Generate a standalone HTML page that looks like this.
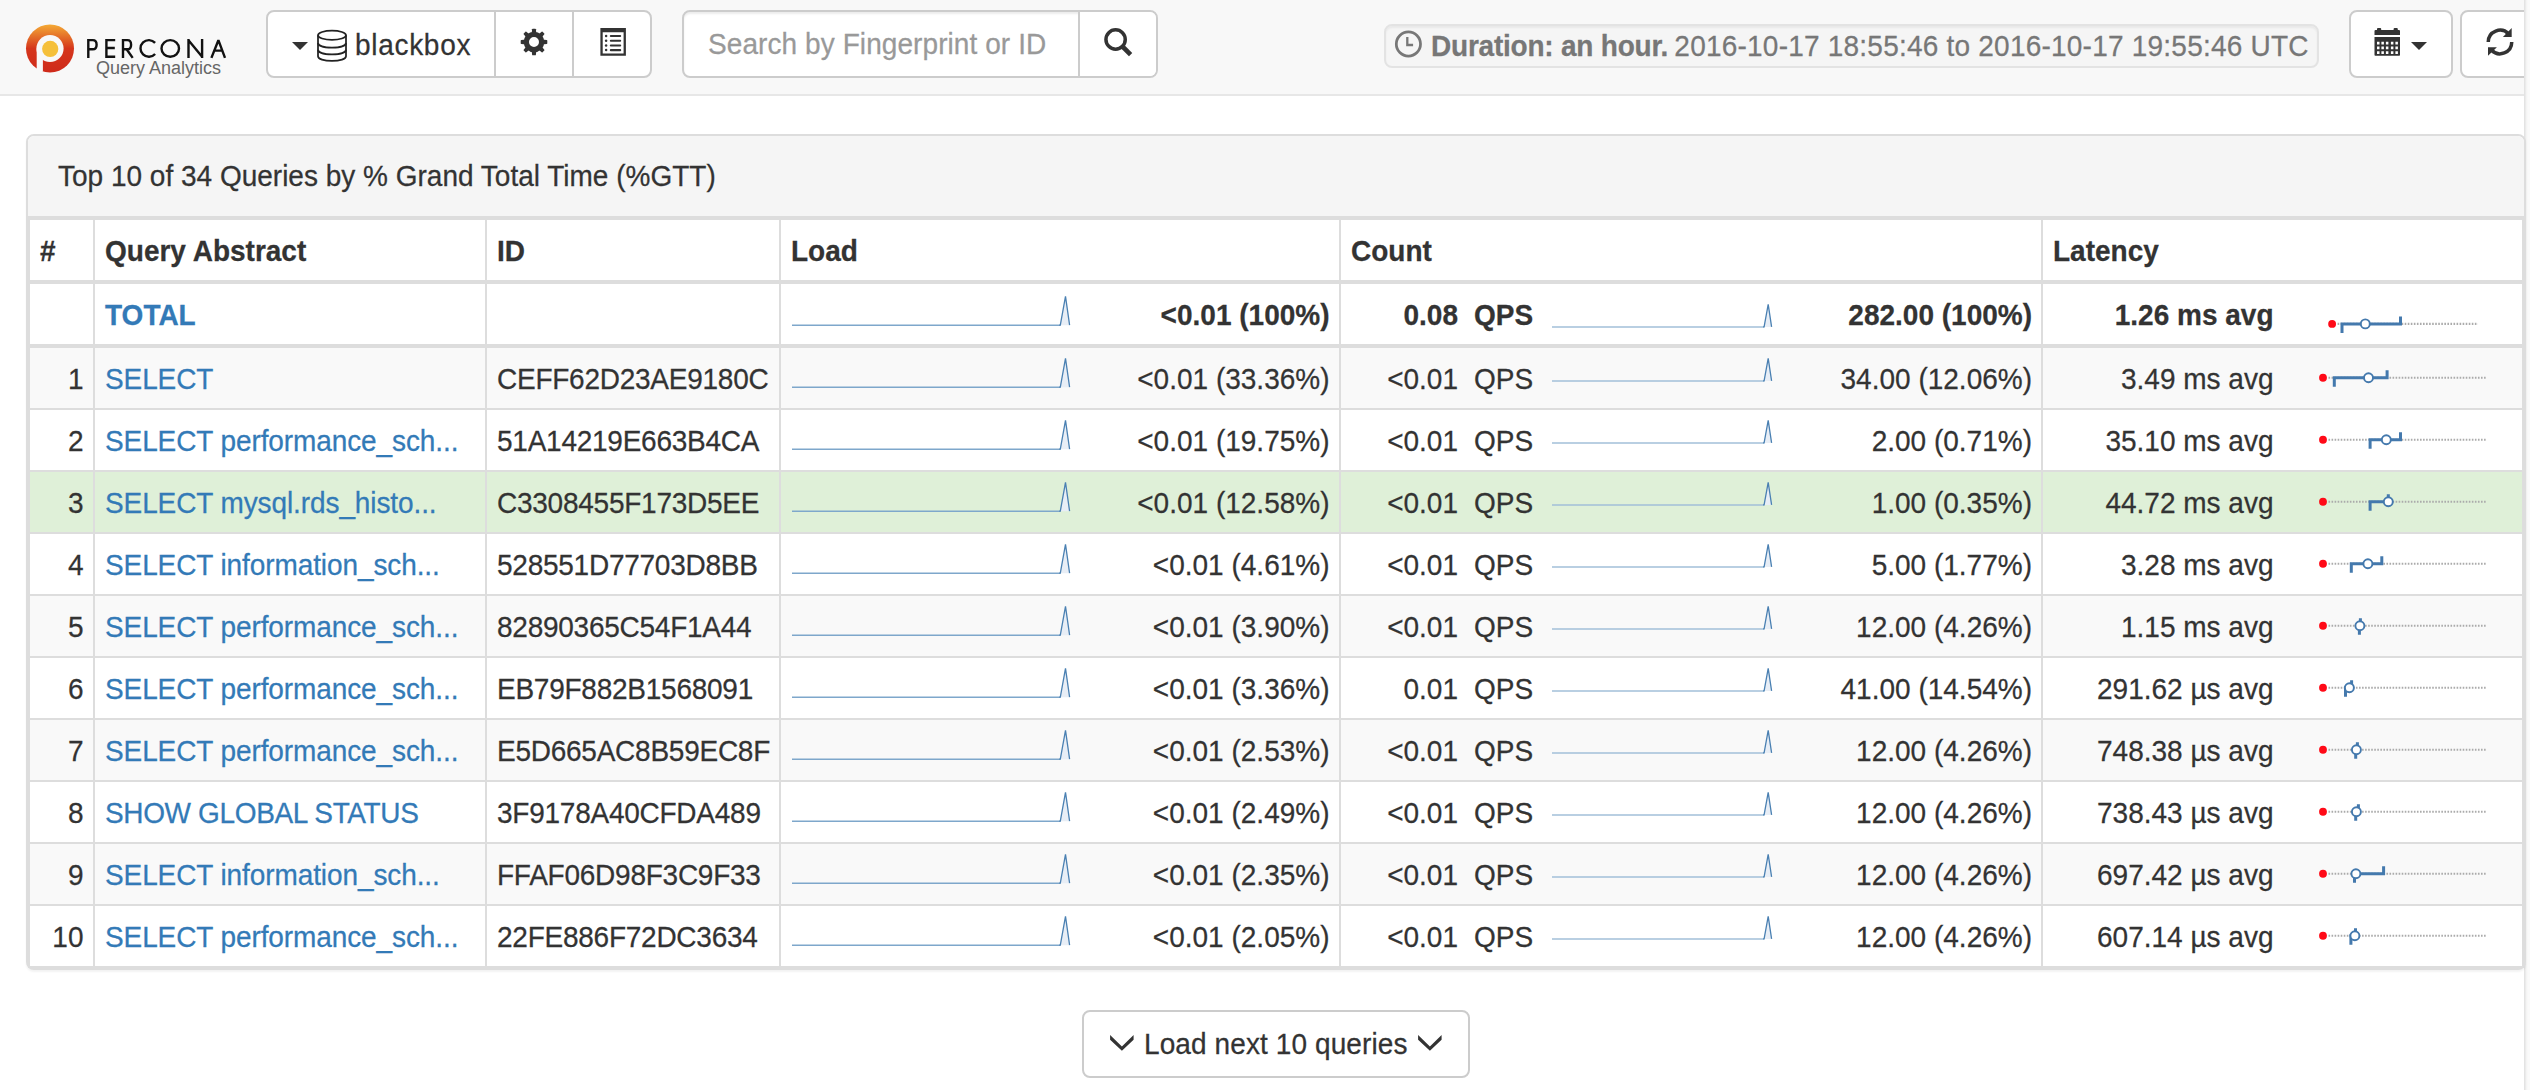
<!DOCTYPE html><html><head><meta charset="utf-8"><style>
*{box-sizing:border-box;margin:0;padding:0}
html,body{width:2530px;height:1090px;overflow:hidden;background:#fff}
body{position:relative;font-family:"Liberation Sans", sans-serif;font-size:28px;color:#333;line-height:40px}
.a{position:absolute}
.t{position:absolute;white-space:nowrap;line-height:60px;height:60px;transform:translateY(1px) scaleY(1.065);transform-origin:0 29.7px;-webkit-text-stroke:0.25px currentColor}
.r{text-align:right}
.b{font-weight:bold}
.lk{color:#337ab7}
.tx{transform:translateY(0.5px) scaleY(1.065);transform-origin:0 19.7px;-webkit-text-stroke:0.25px currentColor}
.hl{position:absolute;background:#ddd}
</style></head><body>
<div class="a" style="left:0;top:0;width:2530px;height:94px;background:#f8f8f8"></div>
<div class="a" style="left:0;top:94px;width:2530px;height:2px;background:#e7e7e7"></div>
<svg class="a" style="left:20px;top:18px" width="60" height="60" viewBox="0 0 60 60">
<defs><linearGradient id="lg" x1="0" y1="0" x2="0" y2="1"><stop offset="0" stop-color="#f4aa35"/><stop offset="0.5" stop-color="#d5361c"/><stop offset="1" stop-color="#cf2a1a"/></linearGradient></defs>
<circle cx="30" cy="30.5" r="24" fill="url(#lg)"/>
<circle cx="30" cy="30.5" r="13.6" fill="#f8f8f8"/>
<rect x="16.7" y="30.5" width="6.2" height="23" fill="#f8f8f8"/>
<circle cx="30.2" cy="30.9" r="8.1" fill="#f5c03a"/>
</svg>
<svg class="a" style="left:0;top:0" width="240" height="80" viewBox="0 0 240 80" fill="none" stroke="#111" stroke-width="2.4" stroke-linejoin="miter">
<path d="M88.3 57.9 V40.1 H92.8 C95.9 40.1 96.6 42.2 96.6 44.7 C96.6 47.2 95.6 49.3 92.8 49.3 H88.3"/>
<path d="M115.2 40.1 H106.4 V56.7 H115.2 M106.4 48 H114.8"/>
<path d="M123 57.9 V40.1 H127.4 C130.5 40.1 131.1 42.2 131.1 44.7 C131.1 47.2 130.1 49.3 127.4 49.3 H123 M126.6 49.3 L132.7 57.9"/>
<path d="M155.1 42.9 A8.35 8.35 0 1 0 155.1 54"/>
<ellipse cx="170.25" cy="48.4" rx="8.75" ry="8.3"/>
<path d="M188.5 57.9 V38.9 M188.3 40 L202.3 57 M202.1 57.9 V38.9"/>
<path d="M211.4 57.9 L218.4 40.2 L225 57.9 M214 50.6 H222.6" stroke-linejoin="bevel"/>
</svg>
<div class="a" style="left:96px;top:56.5px;font-size:18px;line-height:22px;color:#666">Query Analytics</div>
<div class="a" style="left:266px;top:10px;width:386px;height:68px;background:#fff;border:2px solid #ccc;border-radius:8px"></div>
<div class="a" style="left:494px;top:10px;width:2px;height:68px;background:#ccc"></div>
<div class="a" style="left:572px;top:10px;width:2px;height:68px;background:#ccc"></div>
<div class="a" style="left:292px;top:42px;width:0;height:0;border-left:8px solid transparent;border-right:8px solid transparent;border-top:8px solid #333"></div>
<svg class="a" style="left:316px;top:29px" width="32" height="34" viewBox="0 0 32 34" fill="none" stroke="#222" stroke-width="1.75">
<ellipse cx="16" cy="6.25" rx="14" ry="4.55"/>
<path d="M2 6.25 V27.2 C2 30 8 31.9 16 31.9 C24 31.9 30 30 30 27.2 V6.25"/>
<path d="M2 13.9 C2 16.7 8 18.5 16 18.5 C24 18.5 30 16.7 30 13.9"/>
<path d="M2 20.8 C2 23.6 8 25.4 16 25.4 C24 25.4 30 23.6 30 20.8"/>
</svg>
<div class="a tx" style="left:355px;top:24.5px;line-height:40px;letter-spacing:0.7px">blackbox</div>
<svg class="a" style="left:520px;top:28px" width="28" height="28" viewBox="0 0 28 28">
<g fill="#333"><path d="M11.6 6 L12.1 1.3 Q12.2 0.7 12.8 0.7 H15.2 Q15.8 0.7 15.9 1.3 L16.4 6 Z" transform="rotate(0 14 14)"/><path d="M11.6 6 L12.1 1.3 Q12.2 0.7 12.8 0.7 H15.2 Q15.8 0.7 15.9 1.3 L16.4 6 Z" transform="rotate(45 14 14)"/><path d="M11.6 6 L12.1 1.3 Q12.2 0.7 12.8 0.7 H15.2 Q15.8 0.7 15.9 1.3 L16.4 6 Z" transform="rotate(90 14 14)"/><path d="M11.6 6 L12.1 1.3 Q12.2 0.7 12.8 0.7 H15.2 Q15.8 0.7 15.9 1.3 L16.4 6 Z" transform="rotate(135 14 14)"/><path d="M11.6 6 L12.1 1.3 Q12.2 0.7 12.8 0.7 H15.2 Q15.8 0.7 15.9 1.3 L16.4 6 Z" transform="rotate(180 14 14)"/><path d="M11.6 6 L12.1 1.3 Q12.2 0.7 12.8 0.7 H15.2 Q15.8 0.7 15.9 1.3 L16.4 6 Z" transform="rotate(225 14 14)"/><path d="M11.6 6 L12.1 1.3 Q12.2 0.7 12.8 0.7 H15.2 Q15.8 0.7 15.9 1.3 L16.4 6 Z" transform="rotate(270 14 14)"/><path d="M11.6 6 L12.1 1.3 Q12.2 0.7 12.8 0.7 H15.2 Q15.8 0.7 15.9 1.3 L16.4 6 Z" transform="rotate(315 14 14)"/></g>
<path fill="#333" fill-rule="evenodd" d="M14 3.7 A10.3 10.3 0 1 0 14 24.3 A10.3 10.3 0 1 0 14 3.7 Z M14 9 A5 5 0 1 0 14 19 A5 5 0 1 0 14 9 Z"/></svg>
<svg class="a" style="left:600px;top:28px" width="27" height="29" viewBox="0 0 27 29">
<path fill="#333" fill-rule="evenodd" d="M0.4 0 H25.9 V27.7 H0.4 Z M2.7 4.2 V25.4 H23.6 V4.2 Z"/>
<g fill="#333"><circle cx="6.1" cy="8" r="1.25"/><rect x="9.8" y="7" width="11.4" height="2.1" rx="1"/>
<circle cx="6.1" cy="12.7" r="1.25"/><rect x="9.8" y="11.7" width="11.4" height="2.1" rx="1"/>
<circle cx="6.1" cy="17.4" r="1.25"/><rect x="9.8" y="16.4" width="11.4" height="2.1" rx="1"/>
<circle cx="6.1" cy="22.1" r="1.25"/><rect x="9.8" y="21.1" width="11.4" height="2.1" rx="1"/></g>
</svg>
<div class="a" style="left:682px;top:10px;width:476px;height:68px;background:#fff;border:2px solid #ccc;border-radius:8px;box-shadow:inset 0 2px 2px rgba(0,0,0,.075)"></div>
<div class="a" style="left:1078px;top:10px;width:2px;height:68px;background:#ccc"></div>
<div class="a" style="left:1080px;top:12px;width:76px;height:64px;background:#fff;border-radius:0 6px 6px 0"></div>
<div class="a tx" style="left:708px;top:23.5px;color:#999;letter-spacing:0.08px">Search by Fingerprint or ID</div>
<svg class="a" style="left:1103px;top:27px" width="31" height="31" viewBox="0 0 31 31">
<circle cx="12.6" cy="12.5" r="9.65" fill="none" stroke="#333" stroke-width="3.5"/>
<path d="M19 19 L27.6 27.6" stroke="#333" stroke-width="4.6" stroke-linecap="butt" stroke-linejoin="round"/></svg>
<div class="a" style="left:1384px;top:24px;width:935px;height:44px;background:#f5f5f5;border:2px solid #e3e3e3;border-radius:8px;box-shadow:inset 0 2px 2px rgba(0,0,0,.05)"></div>
<svg class="a" style="left:1394px;top:30px" width="29" height="29" viewBox="0 0 29 29">
<circle cx="14.4" cy="14" r="12.1" fill="none" stroke="#777" stroke-width="2.75"/>
<path d="M13.3 7 V15 H19.1" fill="none" stroke="#777" stroke-width="2.3"/></svg>
<div class="a tx" style="left:1431px;top:25.5px;color:#777"><b style="letter-spacing:-0.22px">Duration: an hour.</b><span style="margin-left:-1.8px;letter-spacing:0.22px"> 2016-10-17 18:55:46 to 2016-10-17 19:55:46 UTC</span></div>
<div class="a" style="left:2349px;top:10px;width:104px;height:68px;background:#fff;border:2px solid #ccc;border-radius:8px"></div>
<svg class="a" style="left:2374px;top:27px" width="27" height="30" viewBox="0 0 27 30">
<path fill="#333" d="M0.5 4.1 Q0.5 3.1 1.5 3.1 H3 V2 Q3 1 4 1 H6.2 Q7.2 1 7.2 2 V3.1 H19.6 V2 Q19.6 1 20.6 1 H22.8 Q23.8 1 23.8 2 V3.1 H25 Q26 3.1 26 4.1 V7.9 H0.5 Z"/>
<path fill="#333" fill-rule="evenodd" d="M0.5 10.1 H26 V27.9 Q26 28.7 25.2 28.7 H1.3 Q0.5 28.7 0.5 27.9 Z M3 14.8 h2.5 v2.6 h-2.5 Z M7.4 14.8 h2.5 v2.6 h-2.5 Z M11.9 14.8 h2.5 v2.6 h-2.5 Z M16.9 14.8 h2.5 v2.6 h-2.5 Z M21.4 14.8 h2.5 v2.6 h-2.5 Z M3 19.6 h2.5 v2.6 h-2.5 Z M7.4 19.6 h2.5 v2.6 h-2.5 Z M11.9 19.6 h2.5 v2.6 h-2.5 Z M16.9 19.6 h2.5 v2.6 h-2.5 Z M21.4 19.6 h2.5 v2.6 h-2.5 Z M3 24.3 h2.5 v2.6 h-2.5 Z M7.4 24.3 h2.5 v2.6 h-2.5 Z M11.9 24.3 h2.5 v2.6 h-2.5 Z M16.9 24.3 h2.5 v2.6 h-2.5 Z M21.4 24.3 h2.5 v2.6 h-2.5 Z"/>
</svg>
<div class="a" style="left:2411px;top:42px;width:0;height:0;border-left:8px solid transparent;border-right:8px solid transparent;border-top:8px solid #333"></div>
<div class="a" style="left:2460px;top:10px;width:80px;height:68px;background:#fff;border:2px solid #ccc;border-radius:8px"></div>
<svg class="a" style="left:2484px;top:26px" width="32" height="32" viewBox="0 0 32 32">
<path d="M4.25 16 A11.75 11.75 0 0 1 24.6 8" fill="none" stroke="#333" stroke-width="3.5"/>
<path d="M27.7 1.9 V11.1 H18.9 Z" fill="#333"/>
<path d="M27.75 16 A11.75 11.75 0 0 1 7.4 24" fill="none" stroke="#333" stroke-width="3.5"/>
<path d="M4 29.7 V21.2 H12.9 Z" fill="#333"/>
</svg>
<div class="a" style="left:2524px;top:0;width:6px;height:1090px;background:linear-gradient(to right,#e0e0e0 0,#e6e6e6 1px,#f4f4f4 2.5px,#fafafa 4px)"></div>
<div class="a" style="left:26px;top:134px;width:2500px;height:836px;background:#fff;border:2px solid #ddd;border-radius:8px;box-shadow:0 2px 2px rgba(0,0,0,.05)"></div>
<div class="a" style="left:28px;top:136px;width:2496px;height:80px;background:#f5f5f5;border-radius:6px 6px 0 0"></div>
<div class="a" style="left:28px;top:216px;width:2496px;height:2px;background:#ddd"></div>
<div class="a tx" style="left:58px;top:156px">Top 10 of 34 Queries by % Grand Total Time (%GTT)</div>
<div class="a" style="left:30px;top:348px;width:2492px;height:60px;background:#f9f9f9"></div>
<div class="a" style="left:30px;top:472px;width:2492px;height:60px;background:#dff0d8"></div>
<div class="a" style="left:30px;top:596px;width:2492px;height:60px;background:#f9f9f9"></div>
<div class="a" style="left:30px;top:720px;width:2492px;height:60px;background:#f9f9f9"></div>
<div class="a" style="left:30px;top:844px;width:2492px;height:60px;background:#f9f9f9"></div>
<div class="a" style="left:28px;top:218px;width:2496px;height:2px;background:#ddd"></div>
<div class="a" style="left:28px;top:280px;width:2496px;height:4px;background:#ddd"></div>
<div class="a" style="left:28px;top:344px;width:2496px;height:4px;background:#ddd"></div>
<div class="a" style="left:28px;top:408px;width:2496px;height:2px;background:#ddd"></div>
<div class="a" style="left:28px;top:470px;width:2496px;height:2px;background:#ddd"></div>
<div class="a" style="left:28px;top:532px;width:2496px;height:2px;background:#ddd"></div>
<div class="a" style="left:28px;top:594px;width:2496px;height:2px;background:#ddd"></div>
<div class="a" style="left:28px;top:656px;width:2496px;height:2px;background:#ddd"></div>
<div class="a" style="left:28px;top:718px;width:2496px;height:2px;background:#ddd"></div>
<div class="a" style="left:28px;top:780px;width:2496px;height:2px;background:#ddd"></div>
<div class="a" style="left:28px;top:842px;width:2496px;height:2px;background:#ddd"></div>
<div class="a" style="left:28px;top:904px;width:2496px;height:2px;background:#ddd"></div>
<div class="a" style="left:28px;top:966px;width:2496px;height:2px;background:#ddd"></div>
<div class="a" style="left:28px;top:218px;width:2px;height:750px;background:#ddd"></div>
<div class="a" style="left:93px;top:218px;width:2px;height:750px;background:#ddd"></div>
<div class="a" style="left:485px;top:218px;width:2px;height:750px;background:#ddd"></div>
<div class="a" style="left:779px;top:218px;width:2px;height:750px;background:#ddd"></div>
<div class="a" style="left:1339px;top:218px;width:2px;height:750px;background:#ddd"></div>
<div class="a" style="left:2041px;top:218px;width:2px;height:750px;background:#ddd"></div>
<div class="a" style="left:2522px;top:218px;width:2px;height:750px;background:#ddd"></div>
<div class="t b" style="left:40px;top:220px">#</div>
<div class="t b" style="left:105px;top:220px">Query Abstract</div>
<div class="t b" style="left:497px;top:220px">ID</div>
<div class="t b" style="left:791px;top:220px">Load</div>
<div class="t b" style="left:1351px;top:220px">Count</div>
<div class="t b" style="left:2053px;top:220px">Latency</div>
<div class="t b lk" style="left:105px;top:284px">TOTAL</div>
<svg class="a" style="left:790px;top:284px" width="286" height="60" viewBox="0 0 286 60"><path d="M270.3 41.2 L275.5 12.3 L279.6 41.2 Z" fill="#e8eef6"/><path d="M2.0 41.2 L270.3 41.2" fill="none" stroke="#7ea7cb" stroke-width="1.5"/><path d="M269.3 41.2 L270.3 41.2 L275.5 12.3 L279.6 41.2" fill="none" stroke="#4a80b2" stroke-width="1.3" stroke-linejoin="miter"/></svg>
<div class="t b r" style="left:1090px;width:239.5px;top:284px">&lt;0.01 (100%)</div>
<div class="t b r" style="left:1341px;width:117px;top:284px">0.08</div>
<div class="t b" style="left:1474px;top:284px">QPS</div>
<svg class="a" style="left:1550px;top:284px" width="228" height="60" viewBox="0 0 228 60"><path d="M214.1 42.9 L218.2 20.3 L221.6 42.9 Z" fill="#e8eef6"/><path d="M2.0 42.9 L214.1 42.9" fill="none" stroke="#a2bfd8" stroke-width="1.5"/><path d="M213.1 42.9 L214.1 42.9 L218.2 20.3 L221.6 42.9" fill="none" stroke="#4a80b2" stroke-width="1.3" stroke-linejoin="miter"/></svg>
<div class="t b r" style="left:1790px;width:242px;top:284px">282.00 (100%)</div>
<div class="t b r" style="left:2043px;width:230.5px;top:284px">1.26 ms avg</div>
<svg class="a" style="left:2300px;top:284px" width="200" height="60" viewBox="0 0 200 60"><line x1="37.6" y1="39.89999999999998" x2="178.0" y2="39.89999999999998" stroke="#ababab" stroke-width="2.2" stroke-dasharray="1.6 1.45"/><circle cx="32.1" cy="39.89999999999998" r="3.9" fill="#ff0a17"/><path d="M42.0 48.9 V39.89999999999998 H100.5 V32.4" fill="none" stroke="#4479ad" stroke-width="3"/><circle cx="65.3" cy="39.89999999999998" r="4.5" fill="#fff" stroke="#4479ad" stroke-width="1.9"/></svg>
<div class="t r" style="left:30px;width:53.5px;top:348px">1</div>
<div class="t lk" style="left:105px;top:348px;letter-spacing:-0.1px">SELECT</div>
<div class="t" style="left:497px;top:348px;letter-spacing:-0.25px">CEFF62D23AE9180C</div>
<svg class="a" style="left:790px;top:348px" width="286" height="60" viewBox="0 0 286 60"><path d="M270.3 39.2 L275.5 10.3 L279.6 39.2 Z" fill="#e8eef6"/><path d="M2.0 39.2 L270.3 39.2" fill="none" stroke="#7ea7cb" stroke-width="1.5"/><path d="M269.3 39.2 L270.3 39.2 L275.5 10.3 L279.6 39.2" fill="none" stroke="#4a80b2" stroke-width="1.3" stroke-linejoin="miter"/></svg>
<div class="t r" style="left:1090px;width:239.5px;top:348px">&lt;0.01 (33.36%)</div>
<div class="t r" style="left:1341px;width:117px;top:348px">&lt;0.01</div>
<div class="t" style="left:1474px;top:348px">QPS</div>
<svg class="a" style="left:1550px;top:348px" width="228" height="60" viewBox="0 0 228 60"><path d="M214.1 32.9 L218.2 10.3 L221.6 32.9 Z" fill="#e8eef6"/><path d="M2.0 32.9 L214.1 32.9" fill="none" stroke="#a2bfd8" stroke-width="1.5"/><path d="M213.1 32.9 L214.1 32.9 L218.2 10.3 L221.6 32.9" fill="none" stroke="#4a80b2" stroke-width="1.3" stroke-linejoin="miter"/></svg>
<div class="t r" style="left:1790px;width:242px;top:348px">34.00 (12.06%)</div>
<div class="t r" style="left:2043px;width:230.5px;top:348px">3.49 ms avg</div>
<svg class="a" style="left:2300px;top:348px" width="200" height="60" viewBox="0 0 200 60"><line x1="28.5" y1="29.75" x2="187.0" y2="29.75" stroke="#ababab" stroke-width="2.2" stroke-dasharray="1.6 1.45"/><circle cx="23.0" cy="29.75" r="3.9" fill="#ff0a17"/><path d="M34.3 38.8 V29.75 H87.1 V22.2" fill="none" stroke="#4479ad" stroke-width="3"/><circle cx="68.5" cy="29.75" r="4.5" fill="#fff" stroke="#4479ad" stroke-width="1.9"/></svg>
<div class="t r" style="left:30px;width:53.5px;top:410px">2</div>
<div class="t lk" style="left:105px;top:410px;letter-spacing:-0.1px">SELECT performance_sch...</div>
<div class="t" style="left:497px;top:410px;letter-spacing:-0.25px">51A14219E663B4CA</div>
<svg class="a" style="left:790px;top:410px" width="286" height="60" viewBox="0 0 286 60"><path d="M270.3 39.2 L275.5 10.3 L279.6 39.2 Z" fill="#e8eef6"/><path d="M2.0 39.2 L270.3 39.2" fill="none" stroke="#7ea7cb" stroke-width="1.5"/><path d="M269.3 39.2 L270.3 39.2 L275.5 10.3 L279.6 39.2" fill="none" stroke="#4a80b2" stroke-width="1.3" stroke-linejoin="miter"/></svg>
<div class="t r" style="left:1090px;width:239.5px;top:410px">&lt;0.01 (19.75%)</div>
<div class="t r" style="left:1341px;width:117px;top:410px">&lt;0.01</div>
<div class="t" style="left:1474px;top:410px">QPS</div>
<svg class="a" style="left:1550px;top:410px" width="228" height="60" viewBox="0 0 228 60"><path d="M214.1 32.9 L218.2 10.3 L221.6 32.9 Z" fill="#e8eef6"/><path d="M2.0 32.9 L214.1 32.9" fill="none" stroke="#a2bfd8" stroke-width="1.5"/><path d="M213.1 32.9 L214.1 32.9 L218.2 10.3 L221.6 32.9" fill="none" stroke="#4a80b2" stroke-width="1.3" stroke-linejoin="miter"/></svg>
<div class="t r" style="left:1790px;width:242px;top:410px">2.00 (0.71%)</div>
<div class="t r" style="left:2043px;width:230.5px;top:410px">35.10 ms avg</div>
<svg class="a" style="left:2300px;top:410px" width="200" height="60" viewBox="0 0 200 60"><line x1="28.5" y1="29.75" x2="187.0" y2="29.75" stroke="#ababab" stroke-width="2.2" stroke-dasharray="1.6 1.45"/><circle cx="23.0" cy="29.75" r="3.9" fill="#ff0a17"/><path d="M70.1 38.8 V29.75 H100.5 V22.2" fill="none" stroke="#4479ad" stroke-width="3"/><circle cx="86.3" cy="29.75" r="4.5" fill="#fff" stroke="#4479ad" stroke-width="1.9"/></svg>
<div class="t r" style="left:30px;width:53.5px;top:472px">3</div>
<div class="t lk" style="left:105px;top:472px;letter-spacing:-0.1px">SELECT mysql.rds_histo...</div>
<div class="t" style="left:497px;top:472px;letter-spacing:-0.25px">C3308455F173D5EE</div>
<svg class="a" style="left:790px;top:472px" width="286" height="60" viewBox="0 0 286 60"><path d="M270.3 39.2 L275.5 10.3 L279.6 39.2 Z" fill="#e8eef6"/><path d="M2.0 39.2 L270.3 39.2" fill="none" stroke="#7ea7cb" stroke-width="1.5"/><path d="M269.3 39.2 L270.3 39.2 L275.5 10.3 L279.6 39.2" fill="none" stroke="#4a80b2" stroke-width="1.3" stroke-linejoin="miter"/></svg>
<div class="t r" style="left:1090px;width:239.5px;top:472px">&lt;0.01 (12.58%)</div>
<div class="t r" style="left:1341px;width:117px;top:472px">&lt;0.01</div>
<div class="t" style="left:1474px;top:472px">QPS</div>
<svg class="a" style="left:1550px;top:472px" width="228" height="60" viewBox="0 0 228 60"><path d="M214.1 32.9 L218.2 10.3 L221.6 32.9 Z" fill="#e8eef6"/><path d="M2.0 32.9 L214.1 32.9" fill="none" stroke="#a2bfd8" stroke-width="1.5"/><path d="M213.1 32.9 L214.1 32.9 L218.2 10.3 L221.6 32.9" fill="none" stroke="#4a80b2" stroke-width="1.3" stroke-linejoin="miter"/></svg>
<div class="t r" style="left:1790px;width:242px;top:472px">1.00 (0.35%)</div>
<div class="t r" style="left:2043px;width:230.5px;top:472px">44.72 ms avg</div>
<svg class="a" style="left:2300px;top:472px" width="200" height="60" viewBox="0 0 200 60"><line x1="28.5" y1="29.75" x2="187.0" y2="29.75" stroke="#ababab" stroke-width="2.2" stroke-dasharray="1.6 1.45"/><circle cx="23.0" cy="29.75" r="3.9" fill="#ff0a17"/><path d="M70.1 38.8 V29.75 H88.3 V22.2" fill="none" stroke="#4479ad" stroke-width="3"/><circle cx="88.3" cy="29.75" r="4.5" fill="#fff" stroke="#4479ad" stroke-width="1.9"/></svg>
<div class="t r" style="left:30px;width:53.5px;top:534px">4</div>
<div class="t lk" style="left:105px;top:534px;letter-spacing:-0.1px">SELECT information_sch...</div>
<div class="t" style="left:497px;top:534px;letter-spacing:-0.25px">528551D77703D8BB</div>
<svg class="a" style="left:790px;top:534px" width="286" height="60" viewBox="0 0 286 60"><path d="M270.3 39.2 L275.5 10.3 L279.6 39.2 Z" fill="#e8eef6"/><path d="M2.0 39.2 L270.3 39.2" fill="none" stroke="#7ea7cb" stroke-width="1.5"/><path d="M269.3 39.2 L270.3 39.2 L275.5 10.3 L279.6 39.2" fill="none" stroke="#4a80b2" stroke-width="1.3" stroke-linejoin="miter"/></svg>
<div class="t r" style="left:1090px;width:239.5px;top:534px">&lt;0.01 (4.61%)</div>
<div class="t r" style="left:1341px;width:117px;top:534px">&lt;0.01</div>
<div class="t" style="left:1474px;top:534px">QPS</div>
<svg class="a" style="left:1550px;top:534px" width="228" height="60" viewBox="0 0 228 60"><path d="M214.1 32.9 L218.2 10.3 L221.6 32.9 Z" fill="#e8eef6"/><path d="M2.0 32.9 L214.1 32.9" fill="none" stroke="#a2bfd8" stroke-width="1.5"/><path d="M213.1 32.9 L214.1 32.9 L218.2 10.3 L221.6 32.9" fill="none" stroke="#4a80b2" stroke-width="1.3" stroke-linejoin="miter"/></svg>
<div class="t r" style="left:1790px;width:242px;top:534px">5.00 (1.77%)</div>
<div class="t r" style="left:2043px;width:230.5px;top:534px">3.28 ms avg</div>
<svg class="a" style="left:2300px;top:534px" width="200" height="60" viewBox="0 0 200 60"><line x1="28.5" y1="29.75" x2="187.0" y2="29.75" stroke="#ababab" stroke-width="2.2" stroke-dasharray="1.6 1.45"/><circle cx="23.0" cy="29.75" r="3.9" fill="#ff0a17"/><path d="M51.3 38.8 V29.75 H81.8 V22.2" fill="none" stroke="#4479ad" stroke-width="3"/><circle cx="67.9" cy="29.75" r="4.5" fill="#fff" stroke="#4479ad" stroke-width="1.9"/></svg>
<div class="t r" style="left:30px;width:53.5px;top:596px">5</div>
<div class="t lk" style="left:105px;top:596px;letter-spacing:-0.1px">SELECT performance_sch...</div>
<div class="t" style="left:497px;top:596px;letter-spacing:-0.25px">82890365C54F1A44</div>
<svg class="a" style="left:790px;top:596px" width="286" height="60" viewBox="0 0 286 60"><path d="M270.3 39.2 L275.5 10.3 L279.6 39.2 Z" fill="#e8eef6"/><path d="M2.0 39.2 L270.3 39.2" fill="none" stroke="#7ea7cb" stroke-width="1.5"/><path d="M269.3 39.2 L270.3 39.2 L275.5 10.3 L279.6 39.2" fill="none" stroke="#4a80b2" stroke-width="1.3" stroke-linejoin="miter"/></svg>
<div class="t r" style="left:1090px;width:239.5px;top:596px">&lt;0.01 (3.90%)</div>
<div class="t r" style="left:1341px;width:117px;top:596px">&lt;0.01</div>
<div class="t" style="left:1474px;top:596px">QPS</div>
<svg class="a" style="left:1550px;top:596px" width="228" height="60" viewBox="0 0 228 60"><path d="M214.1 32.9 L218.2 10.3 L221.6 32.9 Z" fill="#e8eef6"/><path d="M2.0 32.9 L214.1 32.9" fill="none" stroke="#a2bfd8" stroke-width="1.5"/><path d="M213.1 32.9 L214.1 32.9 L218.2 10.3 L221.6 32.9" fill="none" stroke="#4a80b2" stroke-width="1.3" stroke-linejoin="miter"/></svg>
<div class="t r" style="left:1790px;width:242px;top:596px">12.00 (4.26%)</div>
<div class="t r" style="left:2043px;width:230.5px;top:596px">1.15 ms avg</div>
<svg class="a" style="left:2300px;top:596px" width="200" height="60" viewBox="0 0 200 60"><line x1="28.5" y1="29.75" x2="187.0" y2="29.75" stroke="#ababab" stroke-width="2.2" stroke-dasharray="1.6 1.45"/><circle cx="23.0" cy="29.75" r="3.9" fill="#ff0a17"/><path d="M59.4 38.8 V29.75 H60.4 V22.2" fill="none" stroke="#4479ad" stroke-width="3"/><circle cx="59.9" cy="29.75" r="4.5" fill="#fff" stroke="#4479ad" stroke-width="1.9"/></svg>
<div class="t r" style="left:30px;width:53.5px;top:658px">6</div>
<div class="t lk" style="left:105px;top:658px;letter-spacing:-0.1px">SELECT performance_sch...</div>
<div class="t" style="left:497px;top:658px;letter-spacing:-0.25px">EB79F882B1568091</div>
<svg class="a" style="left:790px;top:658px" width="286" height="60" viewBox="0 0 286 60"><path d="M270.3 39.2 L275.5 10.3 L279.6 39.2 Z" fill="#e8eef6"/><path d="M2.0 39.2 L270.3 39.2" fill="none" stroke="#7ea7cb" stroke-width="1.5"/><path d="M269.3 39.2 L270.3 39.2 L275.5 10.3 L279.6 39.2" fill="none" stroke="#4a80b2" stroke-width="1.3" stroke-linejoin="miter"/></svg>
<div class="t r" style="left:1090px;width:239.5px;top:658px">&lt;0.01 (3.36%)</div>
<div class="t r" style="left:1341px;width:117px;top:658px">0.01</div>
<div class="t" style="left:1474px;top:658px">QPS</div>
<svg class="a" style="left:1550px;top:658px" width="228" height="60" viewBox="0 0 228 60"><path d="M214.1 32.9 L218.2 10.3 L221.6 32.9 Z" fill="#e8eef6"/><path d="M2.0 32.9 L214.1 32.9" fill="none" stroke="#a2bfd8" stroke-width="1.5"/><path d="M213.1 32.9 L214.1 32.9 L218.2 10.3 L221.6 32.9" fill="none" stroke="#4a80b2" stroke-width="1.3" stroke-linejoin="miter"/></svg>
<div class="t r" style="left:1790px;width:242px;top:658px">41.00 (14.54%)</div>
<div class="t r" style="left:2043px;width:230.5px;top:658px">291.62 µs avg</div>
<svg class="a" style="left:2300px;top:658px" width="200" height="60" viewBox="0 0 200 60"><line x1="28.5" y1="29.75" x2="187.0" y2="29.75" stroke="#ababab" stroke-width="2.2" stroke-dasharray="1.6 1.45"/><circle cx="23.0" cy="29.75" r="3.9" fill="#ff0a17"/><path d="M45.5 38.8 V29.75 H51.6 V22.2" fill="none" stroke="#4479ad" stroke-width="3"/><circle cx="49.4" cy="29.75" r="4.5" fill="#fff" stroke="#4479ad" stroke-width="1.9"/></svg>
<div class="t r" style="left:30px;width:53.5px;top:720px">7</div>
<div class="t lk" style="left:105px;top:720px;letter-spacing:-0.1px">SELECT performance_sch...</div>
<div class="t" style="left:497px;top:720px;letter-spacing:-0.25px">E5D665AC8B59EC8F</div>
<svg class="a" style="left:790px;top:720px" width="286" height="60" viewBox="0 0 286 60"><path d="M270.3 39.2 L275.5 10.3 L279.6 39.2 Z" fill="#e8eef6"/><path d="M2.0 39.2 L270.3 39.2" fill="none" stroke="#7ea7cb" stroke-width="1.5"/><path d="M269.3 39.2 L270.3 39.2 L275.5 10.3 L279.6 39.2" fill="none" stroke="#4a80b2" stroke-width="1.3" stroke-linejoin="miter"/></svg>
<div class="t r" style="left:1090px;width:239.5px;top:720px">&lt;0.01 (2.53%)</div>
<div class="t r" style="left:1341px;width:117px;top:720px">&lt;0.01</div>
<div class="t" style="left:1474px;top:720px">QPS</div>
<svg class="a" style="left:1550px;top:720px" width="228" height="60" viewBox="0 0 228 60"><path d="M214.1 32.9 L218.2 10.3 L221.6 32.9 Z" fill="#e8eef6"/><path d="M2.0 32.9 L214.1 32.9" fill="none" stroke="#a2bfd8" stroke-width="1.5"/><path d="M213.1 32.9 L214.1 32.9 L218.2 10.3 L221.6 32.9" fill="none" stroke="#4a80b2" stroke-width="1.3" stroke-linejoin="miter"/></svg>
<div class="t r" style="left:1790px;width:242px;top:720px">12.00 (4.26%)</div>
<div class="t r" style="left:2043px;width:230.5px;top:720px">748.38 µs avg</div>
<svg class="a" style="left:2300px;top:720px" width="200" height="60" viewBox="0 0 200 60"><line x1="28.5" y1="29.75" x2="187.0" y2="29.75" stroke="#ababab" stroke-width="2.2" stroke-dasharray="1.6 1.45"/><circle cx="23.0" cy="29.75" r="3.9" fill="#ff0a17"/><path d="M55.7 38.8 V29.75 H57.4 V22.2" fill="none" stroke="#4479ad" stroke-width="3"/><circle cx="56.4" cy="29.75" r="4.5" fill="#fff" stroke="#4479ad" stroke-width="1.9"/></svg>
<div class="t r" style="left:30px;width:53.5px;top:782px">8</div>
<div class="t lk" style="left:105px;top:782px;letter-spacing:-0.36px">SHOW GLOBAL STATUS</div>
<div class="t" style="left:497px;top:782px;letter-spacing:-0.25px">3F9178A40CFDA489</div>
<svg class="a" style="left:790px;top:782px" width="286" height="60" viewBox="0 0 286 60"><path d="M270.3 39.2 L275.5 10.3 L279.6 39.2 Z" fill="#e8eef6"/><path d="M2.0 39.2 L270.3 39.2" fill="none" stroke="#7ea7cb" stroke-width="1.5"/><path d="M269.3 39.2 L270.3 39.2 L275.5 10.3 L279.6 39.2" fill="none" stroke="#4a80b2" stroke-width="1.3" stroke-linejoin="miter"/></svg>
<div class="t r" style="left:1090px;width:239.5px;top:782px">&lt;0.01 (2.49%)</div>
<div class="t r" style="left:1341px;width:117px;top:782px">&lt;0.01</div>
<div class="t" style="left:1474px;top:782px">QPS</div>
<svg class="a" style="left:1550px;top:782px" width="228" height="60" viewBox="0 0 228 60"><path d="M214.1 32.9 L218.2 10.3 L221.6 32.9 Z" fill="#e8eef6"/><path d="M2.0 32.9 L214.1 32.9" fill="none" stroke="#a2bfd8" stroke-width="1.5"/><path d="M213.1 32.9 L214.1 32.9 L218.2 10.3 L221.6 32.9" fill="none" stroke="#4a80b2" stroke-width="1.3" stroke-linejoin="miter"/></svg>
<div class="t r" style="left:1790px;width:242px;top:782px">12.00 (4.26%)</div>
<div class="t r" style="left:2043px;width:230.5px;top:782px">738.43 µs avg</div>
<svg class="a" style="left:2300px;top:782px" width="200" height="60" viewBox="0 0 200 60"><line x1="28.5" y1="29.75" x2="187.0" y2="29.75" stroke="#ababab" stroke-width="2.2" stroke-dasharray="1.6 1.45"/><circle cx="23.0" cy="29.75" r="3.9" fill="#ff0a17"/><path d="M55.7 38.8 V29.75 H58.4 V22.2" fill="none" stroke="#4479ad" stroke-width="3"/><circle cx="56.4" cy="29.75" r="4.5" fill="#fff" stroke="#4479ad" stroke-width="1.9"/></svg>
<div class="t r" style="left:30px;width:53.5px;top:844px">9</div>
<div class="t lk" style="left:105px;top:844px;letter-spacing:-0.1px">SELECT information_sch...</div>
<div class="t" style="left:497px;top:844px;letter-spacing:-0.25px">FFAF06D98F3C9F33</div>
<svg class="a" style="left:790px;top:844px" width="286" height="60" viewBox="0 0 286 60"><path d="M270.3 39.2 L275.5 10.3 L279.6 39.2 Z" fill="#e8eef6"/><path d="M2.0 39.2 L270.3 39.2" fill="none" stroke="#7ea7cb" stroke-width="1.5"/><path d="M269.3 39.2 L270.3 39.2 L275.5 10.3 L279.6 39.2" fill="none" stroke="#4a80b2" stroke-width="1.3" stroke-linejoin="miter"/></svg>
<div class="t r" style="left:1090px;width:239.5px;top:844px">&lt;0.01 (2.35%)</div>
<div class="t r" style="left:1341px;width:117px;top:844px">&lt;0.01</div>
<div class="t" style="left:1474px;top:844px">QPS</div>
<svg class="a" style="left:1550px;top:844px" width="228" height="60" viewBox="0 0 228 60"><path d="M214.1 32.9 L218.2 10.3 L221.6 32.9 Z" fill="#e8eef6"/><path d="M2.0 32.9 L214.1 32.9" fill="none" stroke="#a2bfd8" stroke-width="1.5"/><path d="M213.1 32.9 L214.1 32.9 L218.2 10.3 L221.6 32.9" fill="none" stroke="#4a80b2" stroke-width="1.3" stroke-linejoin="miter"/></svg>
<div class="t r" style="left:1790px;width:242px;top:844px">12.00 (4.26%)</div>
<div class="t r" style="left:2043px;width:230.5px;top:844px">697.42 µs avg</div>
<svg class="a" style="left:2300px;top:844px" width="200" height="60" viewBox="0 0 200 60"><line x1="28.5" y1="29.75" x2="187.0" y2="29.75" stroke="#ababab" stroke-width="2.2" stroke-dasharray="1.6 1.45"/><circle cx="23.0" cy="29.75" r="3.9" fill="#ff0a17"/><path d="M54.5 38.8 V29.75 H83.6 V22.2" fill="none" stroke="#4479ad" stroke-width="3"/><circle cx="55.9" cy="29.75" r="4.5" fill="#fff" stroke="#4479ad" stroke-width="1.9"/></svg>
<div class="t r" style="left:30px;width:53.5px;top:906px">10</div>
<div class="t lk" style="left:105px;top:906px;letter-spacing:-0.1px">SELECT performance_sch...</div>
<div class="t" style="left:497px;top:906px;letter-spacing:-0.25px">22FE886F72DC3634</div>
<svg class="a" style="left:790px;top:906px" width="286" height="60" viewBox="0 0 286 60"><path d="M270.3 39.2 L275.5 10.3 L279.6 39.2 Z" fill="#e8eef6"/><path d="M2.0 39.2 L270.3 39.2" fill="none" stroke="#7ea7cb" stroke-width="1.5"/><path d="M269.3 39.2 L270.3 39.2 L275.5 10.3 L279.6 39.2" fill="none" stroke="#4a80b2" stroke-width="1.3" stroke-linejoin="miter"/></svg>
<div class="t r" style="left:1090px;width:239.5px;top:906px">&lt;0.01 (2.05%)</div>
<div class="t r" style="left:1341px;width:117px;top:906px">&lt;0.01</div>
<div class="t" style="left:1474px;top:906px">QPS</div>
<svg class="a" style="left:1550px;top:906px" width="228" height="60" viewBox="0 0 228 60"><path d="M214.1 32.9 L218.2 10.3 L221.6 32.9 Z" fill="#e8eef6"/><path d="M2.0 32.9 L214.1 32.9" fill="none" stroke="#a2bfd8" stroke-width="1.5"/><path d="M213.1 32.9 L214.1 32.9 L218.2 10.3 L221.6 32.9" fill="none" stroke="#4a80b2" stroke-width="1.3" stroke-linejoin="miter"/></svg>
<div class="t r" style="left:1790px;width:242px;top:906px">12.00 (4.26%)</div>
<div class="t r" style="left:2043px;width:230.5px;top:906px">607.14 µs avg</div>
<svg class="a" style="left:2300px;top:906px" width="200" height="60" viewBox="0 0 200 60"><line x1="28.5" y1="29.75" x2="187.0" y2="29.75" stroke="#ababab" stroke-width="2.2" stroke-dasharray="1.6 1.45"/><circle cx="23.0" cy="29.75" r="3.9" fill="#ff0a17"/><path d="M50.9 38.8 V29.75 H55.5 V22.2" fill="none" stroke="#4479ad" stroke-width="3"/><circle cx="54.9" cy="29.75" r="4.5" fill="#fff" stroke="#4479ad" stroke-width="1.9"/></svg>
<div class="a" style="left:1082px;top:1010px;width:388px;height:68px;background:#fff;border:2px solid #ccc;border-radius:8px"></div>
<svg class="a" style="left:1110px;top:1034px" width="26" height="18" viewBox="0 0 26 18"><path d="M0.1 1.1 L11.9 12.4 L23.6 1.1 V5.8 L11.9 16.8 L0.1 5.8 Z" fill="#333"/></svg>
<svg class="a" style="left:1418px;top:1034px" width="26" height="18" viewBox="0 0 26 18"><path d="M0.1 1.1 L11.9 12.4 L23.6 1.1 V5.8 L11.9 16.8 L0.1 5.8 Z" fill="#333"/></svg>
<div class="a tx" style="left:1144px;top:1023.5px;letter-spacing:0.1px">Load next 10 queries</div>
</body></html>
